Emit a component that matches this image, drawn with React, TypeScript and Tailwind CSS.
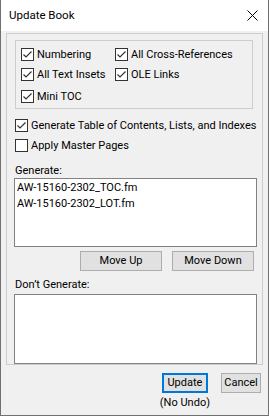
function Check({ checked }: { checked: boolean }) {
  return (
    <span className="w-[13px] h-[13px] border border-[#333333] bg-white flex items-center justify-center shrink-0">
      {checked && (
        <svg width="11" height="11" viewBox="0 0 11 11">
          <path d="M1.5 5.5 L4 8 L9.5 2.5" fill="none" stroke="#333333" strokeWidth="1.2" />
        </svg>
      )}
    </span>
  );
}

function CheckItem({ label, checked, className = "" }: { label: string; checked: boolean; className?: string }) {
  return (
    <div className={`flex items-center h-[13px] gap-[3px] ${className}`}>
      <Check checked={checked} />
      <span className="leading-[13px] whitespace-nowrap">{label}</span>
    </div>
  );
}

export default function App() {
  const generate = ["AW-15160-2302_TOC.fm", "AW-15160-2302_LOT.fm"];

  return (
    <div className="w-[269px] h-[416px] bg-[#f0f0f0] text-[11px] text-black font-['Roboto',sans-serif] flex flex-col border-l border-r border-b border-[#707070] overflow-hidden">
      <div className="h-[31px] bg-white flex items-center justify-between pl-[8px] pr-[10px] shrink-0">
        <span className="text-[11.5px]">Update Book</span>
        <svg width="11" height="11" viewBox="0 0 11 11">
          <path d="M0.5 0.5 L10.5 10.5 M10.5 0.5 L0.5 10.5" stroke="#000" strokeWidth="1" />
        </svg>
      </div>

      <div className="mt-[2px] ml-[5px] w-[257px] h-[332px] border border-[#cdcdcd] flex flex-col pl-[8px]">
        <div className="mt-[6px] w-[238px] h-[69px] border border-[#cdcdcd] pl-[5px] pt-[7px] flex flex-col">
          <div className="flex">
            <CheckItem label="Numbering" checked className="w-[94px]" />
            <CheckItem label="All Cross-References" checked />
          </div>
          <div className="flex mt-[7px]">
            <CheckItem label="All Text Insets" checked className="w-[94px]" />
            <CheckItem label="OLE Links" checked />
          </div>
          <div className="flex mt-[9px]">
            <CheckItem label="Mini TOC" checked />
          </div>
        </div>

        <CheckItem label="Generate Table of Contents, Lists, and Indexes" checked className="mt-[10px]" />
        <CheckItem label="Apply Master Pages" checked={false} className="mt-[7px]" />

        <div className="mt-[11px] leading-[15px] h-[15px]">Generate:</div>
        <div className="w-[243px] h-[69px] border border-[#828282] bg-white pt-[1px] pl-[2px] -ml-[1px]">
          {generate.map((g) => (
            <div key={g} className="leading-[16px] h-[16px]">{g}</div>
          ))}
        </div>

        <div className="mt-[4px] flex gap-[10px] pl-[65px]">
          <button className="w-[82px] h-[20px] bg-[#e1e1e1] border border-[#adadad] leading-[18px] text-center">Move Up</button>
          <button className="w-[82px] h-[20px] bg-[#e1e1e1] border border-[#adadad] leading-[18px] text-center">Move Down</button>
        </div>

        <div className="mt-[6px] leading-[15px] h-[15px]">Don’t Generate:</div>
        <div className="mt-[2px] w-[243px] h-[70px] border border-[#828282] bg-white -ml-[1px]"></div>
      </div>

      <div className="mt-[8px] flex justify-end gap-[11px] pr-[7px]">
        <div className="flex flex-col items-center">
          <button className="w-[46px] h-[20px] bg-[#e1e1e1] border-2 border-[#0078d7] leading-[16px] text-center">Update</button>
          <span className="mt-[2px] leading-[15px]">(No Undo)</span>
        </div>
        <button className="w-[40px] h-[20px] bg-[#e1e1e1] border border-[#adadad] leading-[18px] text-center">Cancel</button>
      </div>
    </div>
  );
}
